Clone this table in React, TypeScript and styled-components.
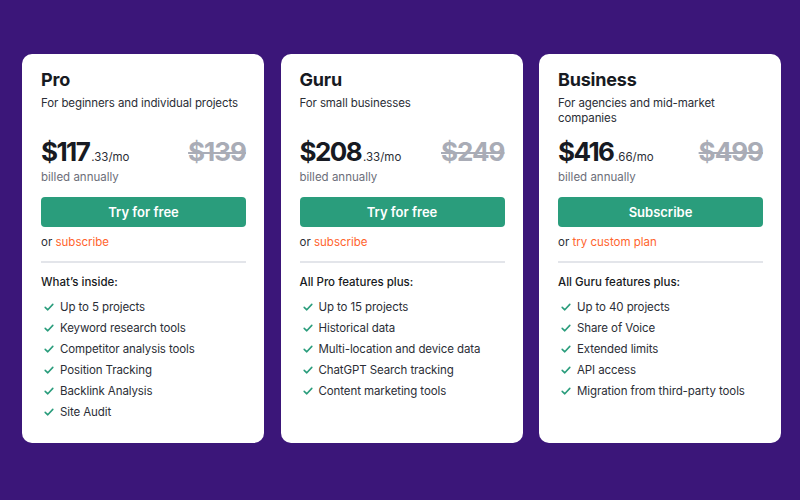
import styled, { createGlobalStyle } from 'styled-components';

const GlobalStyle = createGlobalStyle`
  html, body {
    margin: 0;
    padding: 0;
  }

  body {
    background-color: #3b1679;
    font-family: Inter, "Noto Sans", "Liberation Sans", sans-serif;
    color: #171a22;
  }
`;

type Plan = {
  name: string;
  description: string;
  price: string;
  cents: string;
  oldPrice: string;
  action: string;
  altLink: string;
  listTitle: string;
  features: string[];
};

const plans: Plan[] = [
  {
    name: 'Pro',
    description: 'For beginners and individual projects',
    price: '$117',
    cents: '.33/mo',
    oldPrice: '$139',
    action: 'Try for free',
    altLink: 'subscribe',
    listTitle: 'What’s inside:',
    features: [
      'Up to 5 projects',
      'Keyword research tools',
      'Competitor analysis tools',
      'Position Tracking',
      'Backlink Analysis',
      'Site Audit',
    ],
  },
  {
    name: 'Guru',
    description: 'For small businesses',
    price: '$208',
    cents: '.33/mo',
    oldPrice: '$249',
    action: 'Try for free',
    altLink: 'subscribe',
    listTitle: 'All Pro features plus:',
    features: [
      'Up to 15 projects',
      'Historical data',
      'Multi-location and device data',
      'ChatGPT Search tracking',
      'Content marketing tools',
    ],
  },
  {
    name: 'Business',
    description: 'For agencies and mid-market companies',
    price: '$416',
    cents: '.66/mo',
    oldPrice: '$499',
    action: 'Subscribe',
    altLink: 'try custom plan',
    listTitle: 'All Guru features plus:',
    features: [
      'Up to 40 projects',
      'Share of Voice',
      'Extended limits',
      'API access',
      'Migration from third-party tools',
    ],
  },
];

const Check = () => (
  <svg width="12" height="12" viewBox="0 0 12 12" fill="none">
    <path
      d="M2.2 6.4 L4.8 8.8 L9.8 3.4"
      stroke="#2a9d7c"
      strokeWidth="1.6"
      strokeLinecap="round"
      strokeLinejoin="round"
    />
  </svg>
);

const PlanCard = ({ plan }: { plan: Plan }) => (
  <Card>
    <Name>{plan.name}</Name>
    <Description>{plan.description}</Description>

    <PriceRow>
      <Price>
        <Amount>{plan.price}</Amount>
        <Cents>{plan.cents}</Cents>
      </Price>
      <OldPrice>{plan.oldPrice}</OldPrice>
    </PriceRow>
    <Billed>billed annually</Billed>

    <Button>{plan.action}</Button>
    <Alt>
      or <AltLink href="#">{plan.altLink}</AltLink>
    </Alt>

    <Divider />

    <ListTitle>{plan.listTitle}</ListTitle>
    <Features>
      {plan.features.map((f) => (
        <Feature key={f}>
          <Check />
          <span>{f}</span>
        </Feature>
      ))}
    </Features>
  </Card>
);

const App = () => (
  <>
    <GlobalStyle />
    <Page>
      <Cards>
        {plans.map((p) => (
          <PlanCard key={p.name} plan={p} />
        ))}
      </Cards>
    </Page>
  </>
);

const Page = styled.main`
  box-sizing: border-box;
  width: 800px;
  height: 500px;
  padding: 54px 19px 57px 22px;
`;

const Cards = styled.div`
  display: grid;
  grid-template-columns: repeat(3, 1fr);
  gap: 16.5px;
  height: 100%;
`;

const Card = styled.section`
  display: flex;
  flex-direction: column;
  padding: 16px 18px 0 19px;
  border-radius: 10px;
  background-color: #ffffff;
`;

const Name = styled.h2`
  margin: 0;
  font-size: 18px;
  line-height: 20px;
  font-weight: 700;
  letter-spacing: -0.2px;
`;

const Description = styled.p`
  margin: 6px 0 0;
  min-height: 30px;
  font-size: 11.5px;
  line-height: 15px;
  letter-spacing: -0.1px;
  color: #2b2e36;
`;

const PriceRow = styled.div`
  display: flex;
  align-items: baseline;
  justify-content: space-between;
  height: 30px;
  margin-top: 11px;
  line-height: 30px;
`;

const Price = styled.div`
  display: flex;
  align-items: baseline;
`;

const Amount = styled.span`
  font-size: 26px;
  font-weight: 700;
  letter-spacing: -1.6px;
`;

const Cents = styled.span`
  margin-left: 2px;
  font-size: 11.5px;
  line-height: 1;
  color: #2b2e36;
`;

const OldPrice = styled.span`
  font-size: 26px;
  font-weight: 700;
  letter-spacing: -1px;
  color: #a9acb6;
  text-decoration: line-through;
  text-decoration-thickness: 2px;
`;

const Billed = styled.div`
  margin-top: 2px;
  font-size: 11.5px;
  line-height: 16px;
  color: #6c6e79;
`;

const Button = styled.button`
  margin-top: 12px;
  height: 30px;
  border: none;
  border-radius: 4px;
  background-color: #2a9d7c;
  color: #ffffff;
  font-family: inherit;
  font-size: 13px;
  font-weight: 600;
  cursor: pointer;

  &:hover {
    background-color: #238a6c;
  }
`;

const Alt = styled.div`
  margin-top: 7px;
  font-size: 11.5px;
  line-height: 16px;
  color: #2b2e36;
`;

const AltLink = styled.a`
  color: #ff642d;
  text-decoration: none;
`;

const Divider = styled.hr`
  margin: 11px 0 0;
  border: none;
  height: 2px;
  background-color: #e3e5ea;
`;

const ListTitle = styled.div`
  margin-top: 11px;
  font-size: 11.5px;
  line-height: 16px;
  font-weight: 500;
`;

const Features = styled.ul`
  margin: 6px 0 0;
  padding: 0;
  list-style: none;
`;

const Feature = styled.li`
  display: flex;
  align-items: center;
  gap: 5px;
  height: 21px;
  padding-left: 2px;
  font-size: 11.5px;
  letter-spacing: -0.1px;
  color: #2b2e36;
`;

export default App;
